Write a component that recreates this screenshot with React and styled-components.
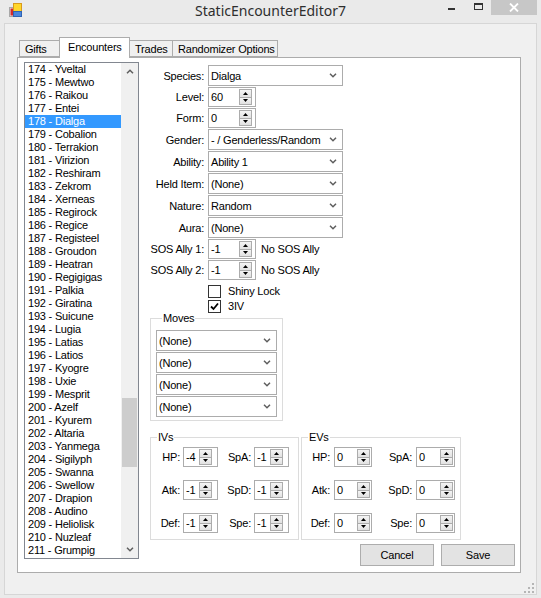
import React from 'react';
import styled, { createGlobalStyle } from 'styled-components';

const GlobalStyle = createGlobalStyle`
  html, body {
    margin: 0;
    padding: 0;
    background: #eaeaea;
  }
  body {
    font-family: "Liberation Sans", Arial, sans-serif;
    font-size: 11px;
    letter-spacing: -0.2px;
    color: #000;
  }
`;

const pokemon = [
  'Yveltal', 'Mewtwo', 'Raikou', 'Entei', 'Dialga', 'Cobalion', 'Terrakion', 'Virizion',
  'Reshiram', 'Zekrom', 'Xerneas', 'Regirock', 'Regice', 'Registeel', 'Groudon', 'Heatran',
  'Regigigas', 'Palkia', 'Giratina', 'Suicune', 'Lugia', 'Latias', 'Latios', 'Kyogre',
  'Uxie', 'Mesprit', 'Azelf', 'Kyurem', 'Altaria', 'Yanmega', 'Sigilyph', 'Swanna',
  'Swellow', 'Drapion', 'Audino', 'Heliolisk', 'Nuzleaf', 'Grumpig',
];

const tabs = [
  { name: 'Gifts', w: 41 },
  { name: 'Encounters', w: 71, active: true },
  { name: 'Trades', w: 44 },
  { name: 'Randomizer Options', w: 106 },
];

const combos = [
  { label: 'Gender:', value: '- / Genderless/Random' },
  { label: 'Ability:', value: 'Ability 1' },
  { label: 'Held Item:', value: '(None)' },
  { label: 'Nature:', value: 'Random' },
  { label: 'Aura:', value: '(None)' },
];

const ivs = [['HP:', '-4', 'SpA:', '-1'], ['Atk:', '-1', 'SpD:', '-1'], ['Def:', '-1', 'Spe:', '-1']];
const evs = [['HP:', '0', 'SpA:', '0'], ['Atk:', '0', 'SpD:', '0'], ['Def:', '0', 'Spe:', '0']];

const Chevron = ({ up }) => (
  <svg width="8" height="5" viewBox="0 0 8 5">
    <path d={up ? 'M1 4.2 L4 1.2 L7 4.2' : 'M1 0.8 L4 3.8 L7 0.8'} fill="none" stroke="#5f5f5f" strokeWidth="1.5" />
  </svg>
);

const Tri = ({ down }) => (
  <svg width="5" height="3" viewBox="0 0 5 3">
    <path d={down ? 'M0 0 H5 L2.5 3Z' : 'M2.5 0 L5 3 H0Z'} fill="#000" />
  </svg>
);

const Spin = ({ inset }) => (
  <Spinner $inset={inset}>
    <SpinBtn><Tri /></SpinBtn>
    <SpinBtn $bottom><Tri down /></SpinBtn>
  </Spinner>
);

const Numeric = ({ value, w, inset }) => (
  <NumBox $w={w}>
    <NumText>{value}</NumText>
    <Spin inset={inset} />
  </NumBox>
);

const Combo = ({ value, w = 135 }) => (
  <ComboBox $w={w}>
    <span>{value}</span>
    <Chevron />
  </ComboBox>
);

const AppIcon = () => (
  <IconSvg width="13" height="14" viewBox="0 0 13 14">
    <rect x="0.5" y="4.5" width="5" height="9" fill="#e8e8e8" stroke="#a8a8a8" />
    <rect x="1.5" y="5.5" width="2.5" height="7" fill="#d42a2a" />
    <rect x="4.5" y="0.5" width="8" height="8" fill="#ffd62a" stroke="#d99a1c" />
    <rect x="4.5" y="8.5" width="8" height="5" fill="#4a86dc" stroke="#2f63b3" />
  </IconSvg>
);

const StatBlock = ({ title, rows, cols, gapX, w, inset }) => (
  <GroupBox $w={w} $pad="5px 0 6px 0">
    <GroupTitle>{title}</GroupTitle>
    <StatGrid $cols={cols} $gapX={gapX}>
      {rows.map((r) => (
        <React.Fragment key={r[0]}>
          <StatLabel>{r[0]}</StatLabel>
          <Numeric value={r[1]} w="100%" inset={inset} />
          <StatLabel>{r[2]}</StatLabel>
          <Numeric value={r[3]} w="100%" inset={inset} />
        </React.Fragment>
      ))}
    </StatGrid>
  </GroupBox>
);

const App = () => {
  return (
    <>
      <GlobalStyle />
      <Window>
        <TitleBar>
          <AppIcon />
          <Title>StaticEncounterEditor7</Title>
          <Caption>
            <CaptionBtn $w={27}><MinGlyph /></CaptionBtn>
            <CaptionBtn $w={26}><MaxGlyph /></CaptionBtn>
            <CaptionBtn $w={46} $close>
              <svg width="10" height="9" viewBox="0 0 10 9">
                <path d="M1 0.5 L9 8.5 M9 0.5 L1 8.5" stroke="#fff" strokeWidth="1.8" />
              </svg>
            </CaptionBtn>
          </Caption>
        </TitleBar>

        <Client>
          <TabStrip>
            {tabs.map((t) => (
              <Tab key={t.name} $w={t.w} $active={t.active}>{t.name}</Tab>
            ))}
          </TabStrip>

          <Panel>
            <ListBox>
              <ListItems>
                {pokemon.map((p, i) => (
                  <ListItem key={p} $selected={i === 4}>{174 + i} - {p}</ListItem>
                ))}
              </ListItems>
              <ScrollBar>
                <ScrollArrow><Chevron up /></ScrollArrow>
                <ScrollTrack>
                  <ScrollThumb style={{ marginTop: 318 }} />
                </ScrollTrack>
                <ScrollArrow><Chevron /></ScrollArrow>
              </ScrollBar>
            </ListBox>

            <RightCol>
              <Form>
                <Row $h={21}>
                  <Label>Species:</Label>
                  <Combo value="Dialga" />
                </Row>
                <Row $h={20}>
                  <Label>Level:</Label>
                  <Numeric value="60" w="48px" inset={3} />
                </Row>
                <Row $h={20}>
                  <Label>Form:</Label>
                  <Numeric value="0" w="48px" inset={3} />
                </Row>
                {combos.map((c) => (
                  <Row key={c.label} $h={21}>
                    <Label>{c.label}</Label>
                    <Combo value={c.value} />
                  </Row>
                ))}
                <Row $h={20}>
                  <Label>SOS Ally 1:</Label>
                  <Numeric value="-1" w="48px" inset={3} />
                  <Note>No SOS Ally</Note>
                </Row>
                <Row $h={20}>
                  <Label>SOS Ally 2:</Label>
                  <Numeric value="-1" w="48px" inset={3} />
                  <Note>No SOS Ally</Note>
                </Row>
                <CheckRow $mt={3}>
                  <CheckBox />
                  <span>Shiny Lock</span>
                </CheckRow>
                <CheckRow>
                  <CheckBox>
                    <svg width="11" height="11" viewBox="0 0 11 11">
                      <path d="M2 5.5 L4.5 8 L9 2.5" fill="none" stroke="#000" strokeWidth="1.8" />
                    </svg>
                  </CheckBox>
                  <span>3IV</span>
                </CheckRow>
              </Form>

              <GroupBox $w={133} $pad="7px 4px 3px 5px">
                <GroupTitle>Moves</GroupTitle>
                <MoveList>
                  {[0, 1, 2, 3].map((i) => (
                    <Combo key={i} value="(None)" w={121} />
                  ))}
                </MoveList>
              </GroupBox>

              <StatsRow>
                <StatBlock title="IVs" rows={ivs} w={149} cols="29px 35px 30px 35px" gapX={3} inset={5} />
                <StatBlock title="EVs" rows={evs} w={160} cols="28px 38px 36px 39px" gapX={4} inset={1} />
              </StatsRow>

              <ButtonRow>
                <Button>Cancel</Button>
                <Button>Save</Button>
              </ButtonRow>
            </RightCol>
          </Panel>

          <Footer>
            <svg width="10" height="10" viewBox="0 0 10 10">
              {[[8, 0], [8, 4], [4, 4], [8, 8], [4, 8], [0, 8]].map(([x, y]) => (
                <rect key={`${x}-${y}`} x={x} y={y} width="2" height="2" fill="#b5b5b5" />
              ))}
            </svg>
          </Footer>
        </Client>
      </Window>
    </>
  );
};

export default App;

const Window = styled.div`
  width: 541px;
  height: 598px;
  display: flex;
  flex-direction: column;
  background: #eaeaea;
  overflow: hidden;
`;

const TitleBar = styled.div`
  height: 23px;
  display: grid;
  grid-template-columns: 1fr auto 1fr;
  align-items: start;
`;

const IconSvg = styled.svg`
  margin: 3px 0 0 9px;
`;

const Title = styled.div`
  font-family: "Noto Sans", "Open Sans", sans-serif;
  font-size: 14px;
  line-height: 21px;
  letter-spacing: 0;
  color: #2e2e2e;
`;

const Caption = styled.div`
  justify-self: end;
  display: flex;
  margin-right: 4px;
`;

const CaptionBtn = styled.div`
  width: ${(p) => p.$w}px;
  height: 15px;
  display: flex;
  align-items: center;
  justify-content: center;
  background: ${(p) => (p.$close ? '#c7c7c7' : 'transparent')};
`;

const MinGlyph = styled.div`
  width: 7px;
  height: 2px;
  margin-top: 3px;
  background: #333;
`;

const MaxGlyph = styled.div`
  width: 9px;
  height: 7px;
  box-sizing: border-box;
  border: 1px solid #333;
  border-top-width: 2px;
  margin-top: -3px;
`;

const Client = styled.div`
  flex: 1;
  margin: 0 4px 3px;
  border: 1px solid #d6d6d6;
  background: #f0f0f0;
  display: flex;
  flex-direction: column;
  padding: 13px 0 0 12px;
`;

const TabStrip = styled.div`
  display: flex;
  align-items: flex-end;
  height: 20px;
  margin-left: 2px;
`;

const Tab = styled.div`
  position: relative;
  box-sizing: border-box;
  width: ${(p) => p.$w}px;
  height: ${(p) => (p.$active ? 21 : 17)}px;
  margin-left: -1px;
  margin-bottom: ${(p) => (p.$active ? -1 : 0)}px;
  z-index: ${(p) => (p.$active ? 1 : 0)};
  padding: ${(p) => (p.$active ? '1px 0 0 8px' : '0 0 0 5px')};
  border: 1px solid #acacac;
  border-bottom: ${(p) => (p.$active ? 'none' : '1px solid #acacac')};
  background: ${(p) => (p.$active ? '#fff' : '#f0f0f0')};
  line-height: 16px;
  white-space: nowrap;

  &:first-child {
    margin-left: 0;
  }
`;

const Panel = styled.div`
  box-sizing: border-box;
  width: 504px;
  height: 516px;
  border: 1px solid #acacac;
  background: #fff;
  display: flex;
  align-items: flex-start;
`;

const ListBox = styled.div`
  box-sizing: border-box;
  width: 115px;
  height: 497px;
  margin: 4px 0 0 6px;
  border: 1px solid #828790;
  display: flex;
  background: #fff;
`;

const ListItems = styled.div`
  flex: 1;
  overflow: hidden;
`;

const ListItem = styled.div`
  height: 13px;
  line-height: 13px;
  padding-left: 3px;
  white-space: nowrap;
  background: ${(p) => (p.$selected ? '#3399ff' : 'transparent')};
  color: ${(p) => (p.$selected ? '#fff' : '#000')};
`;

const ScrollBar = styled.div`
  width: 17px;
  display: flex;
  flex-direction: column;
  background: #f0f0f0;
`;

const ScrollArrow = styled.div`
  height: 17px;
  display: flex;
  align-items: center;
  justify-content: center;
`;

const ScrollTrack = styled.div`
  flex: 1;
  display: flex;
  flex-direction: column;
`;

const ScrollThumb = styled.div`
  height: 69px;
  margin: 0 1px;
  background: #cdcdcd;
`;

const RightCol = styled.div`
  width: 365px;
  margin: 7px 0 0 11px;
  display: flex;
  flex-direction: column;
`;

const Form = styled.div`
  display: flex;
  flex-direction: column;
  gap: 1px;
`;

const Row = styled.div`
  height: ${(p) => p.$h}px;
  display: flex;
  align-items: center;
  gap: 4px;
`;

const Label = styled.div`
  width: 54px;
  flex: none;
  text-align: right;
  white-space: nowrap;
`;

const Note = styled.div`
  margin-left: 1px;
  white-space: nowrap;
`;

const ComboBox = styled.div`
  box-sizing: border-box;
  width: ${(p) => p.$w}px;
  height: 21px;
  border: 1px solid #acacac;
  background: #fff;
  display: flex;
  align-items: center;
  justify-content: space-between;
  padding: 0 5px 0 2px;
  white-space: nowrap;
`;

const NumBox = styled.div`
  box-sizing: border-box;
  width: ${(p) => p.$w};
  height: 20px;
  border: 1px solid #acacac;
  background: #fff;
  display: flex;
  align-items: center;
`;

const NumText = styled.div`
  flex: 1;
  padding-left: 2px;
`;

const Spinner = styled.div`
  width: 13px;
  height: 16px;
  margin-right: ${(p) => p.$inset}px;
  display: flex;
  flex-direction: column;
`;

const SpinBtn = styled.div`
  flex: 1;
  box-sizing: border-box;
  border: 1px solid #acacac;
  border-top: ${(p) => (p.$bottom ? 'none' : '1px solid #acacac')};
  background: linear-gradient(#f4f4f4, #e1e1e1);
  display: flex;
  align-items: center;
  justify-content: center;
`;

const CheckRow = styled.div`
  height: 14px;
  margin-top: ${(p) => p.$mt || 0}px;
  padding-left: 58px;
  display: flex;
  align-items: center;
  gap: 7px;
`;

const CheckBox = styled.div`
  box-sizing: border-box;
  width: 13px;
  height: 13px;
  border: 1px solid #333;
  background: #fff;
  display: flex;
  align-items: center;
  justify-content: center;
`;

const GroupBox = styled.fieldset`
  box-sizing: border-box;
  width: ${(p) => p.$w}px;
  min-width: 0;
  margin: 0;
  padding: ${(p) => p.$pad};
  border: 1px solid #dcdcdc;
`;

const GroupTitle = styled.legend`
  font-size: 11px;
  line-height: 10px;
  padding: 0 1px;
  margin-left: 6px;
`;

const MoveList = styled.div`
  display: flex;
  flex-direction: column;
  gap: 1px;
`;

const StatsRow = styled.div`
  display: flex;
  gap: 2px;
  margin-top: 11px;
`;

const StatGrid = styled.div`
  display: grid;
  grid-template-columns: ${(p) => p.$cols};
  grid-auto-rows: 20px;
  column-gap: ${(p) => p.$gapX}px;
  row-gap: 13px;
  align-items: center;
`;

const StatLabel = styled.div`
  text-align: right;
  white-space: nowrap;
`;

const ButtonRow = styled.div`
  display: flex;
  justify-content: flex-end;
  gap: 7px;
  margin-top: 4px;
`;

const Button = styled.button`
  box-sizing: border-box;
  width: 74px;
  height: 22px;
  padding: 0;
  border: 1px solid #adadad;
  background: #e3e3e3;
  font-family: "Liberation Sans", Arial, sans-serif;
  font-size: 11px;
  letter-spacing: -0.2px;
  color: #000;
`;

const Footer = styled.div`
  flex: 1;
  display: flex;
  justify-content: flex-end;
  align-items: flex-end;
  padding: 0 2px 1px 0;
`;
